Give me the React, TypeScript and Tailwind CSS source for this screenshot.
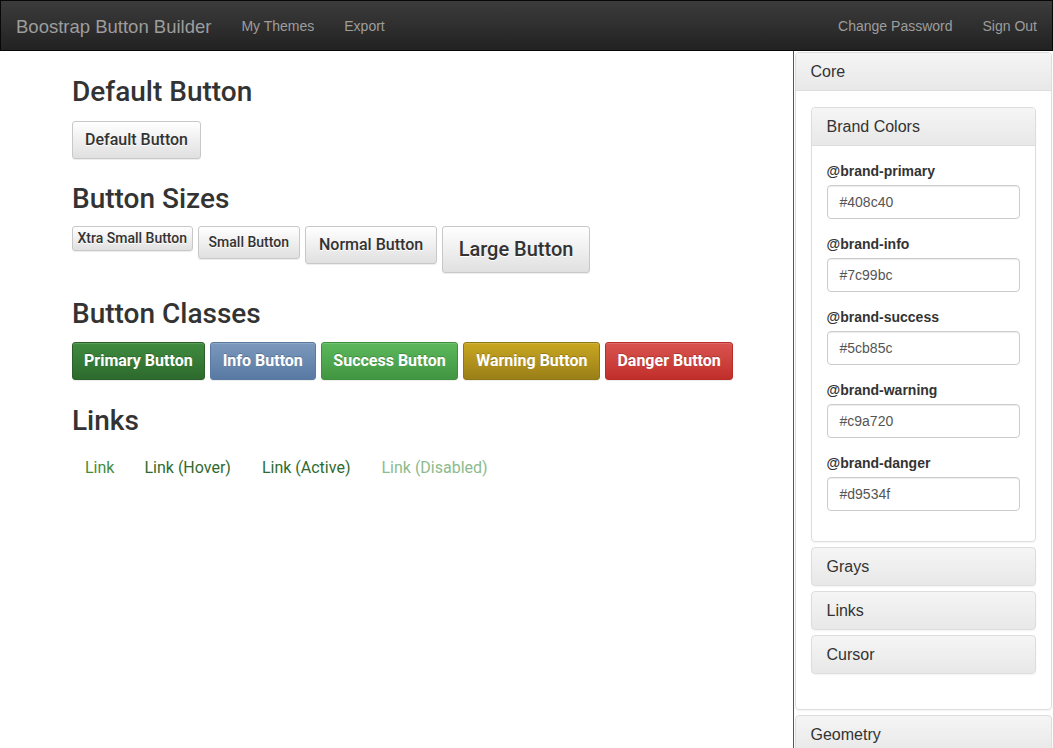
import React from 'react';

const roboto = { fontFamily: 'Roboto, "Liberation Sans", sans-serif' };

interface ColorField {
  label: string;
  value: string;
}

const brandColors: ColorField[] = [
  { label: '@brand-primary', value: '#408c40' },
  { label: '@brand-info', value: '#7c99bc' },
  { label: '@brand-success', value: '#5cb85c' },
  { label: '@brand-warning', value: '#c9a720' },
  { label: '@brand-danger', value: '#d9534f' },
];

const defaultBtn =
  'rounded-[3px] border border-[#c8c8c8] bg-gradient-to-b from-white to-[#e0e0e0] text-[#333] font-medium [text-shadow:0_1px_0_#fff] shadow-[inset_0_1px_0_rgba(255,255,255,0.15),0_1px_1px_rgba(0,0,0,0.075)]';

const colorBtn =
  'h-[38px] rounded-[3px] border text-[16px] leading-[24px] font-bold text-white [text-shadow:0_-1px_0_rgba(0,0,0,0.2)] shadow-[inset_0_1px_0_rgba(255,255,255,0.15),0_1px_1px_rgba(0,0,0,0.075)]';

function Heading({ children, className }: { children: React.ReactNode; className?: string }) {
  return (
    <h2 className={`text-[28px] leading-[31px] font-medium text-[#333] ${className ?? ''}`}>{children}</h2>
  );
}

const panelHead = 'h-[38px] px-[15px] flex items-center text-[16px] text-[#333]';

function CollapsedPanel({ title, className }: { title: string; className?: string }) {
  return (
    <div
      className={`rounded-[4px] border border-[#ddd] bg-gradient-to-b from-[#f5f5f5] to-[#e8e8e8] shadow-[0_1px_2px_rgba(0,0,0,0.05)] ${className ?? ''}`}
    >
      <div className="h-[37px] px-[15px] flex items-center text-[16px] text-[#333]">{title}</div>
    </div>
  );
}

export default function App() {
  return (
    <div
      className="h-[748px] overflow-hidden flex flex-col bg-white"
      style={{ fontFamily: '"Liberation Sans", Arial, sans-serif' }}
    >
      {/* Navbar */}
      <nav className="h-[51px] shrink-0 pt-[2px] flex items-center justify-between border border-[#080808] bg-gradient-to-b from-[#3c3c3c] to-[#222] text-[#9d9d9d]">
        <div className="flex items-center">
          <span className="px-[15px] text-[18.5px]">Boostrap Button Builder</span>
          <span className="px-[15px] text-[14px]">My Themes</span>
          <span className="px-[15px] text-[14px]">Export</span>
        </div>
        <div className="flex items-center">
          <span className="px-[15px] text-[14px]">Change Password</span>
          <span className="px-[15px] text-[14px]">Sign Out</span>
        </div>
      </nav>

      <div className="flex flex-1 min-h-0">
        {/* Preview */}
        <main className="flex-1 pl-[72px] pt-[25px]" style={roboto}>
          <Heading>Default Button</Heading>
          <div className="mt-[14px] flex">
            <button className={`h-[38px] px-[12px] text-[16px] leading-[24px] ${defaultBtn}`}>Default Button</button>
          </div>

          <Heading className="mt-[24px]">Button Sizes</Heading>
          <div className="mt-[12px] flex items-start gap-[5px]">
            <button className={`h-[25px] px-[4.5px] text-[14px] leading-[21px] ${defaultBtn}`}>Xtra Small Button</button>
            <button className={`h-[33px] px-[10px] text-[14px] leading-[21px] ${defaultBtn}`}>Small Button</button>
            <button className={`h-[38px] px-[13px] text-[16px] leading-[24px] ${defaultBtn}`}>Normal Button</button>
            <button className={`h-[47px] px-[15.5px] text-[20px] leading-[25px] ${defaultBtn}`}>Large Button</button>
          </div>

          <Heading className="mt-[25px]">Button Classes</Heading>
          <div className="mt-[13px] flex items-start gap-[5px]">
            <button className={`${colorBtn} px-[11px] border-[#2b602b] bg-gradient-to-b from-[#408c40] to-[#2d6a2d]`}>Primary Button</button>
            <button className={`${colorBtn} px-[12px] border-[#5a7aa2] bg-gradient-to-b from-[#7c99bc] to-[#5879a3]`}>Info Button</button>
            <button className={`${colorBtn} px-[11.5px] border-[#3e8f3e] bg-gradient-to-b from-[#5cb85c] to-[#419641]`}>Success Button</button>
            <button className={`${colorBtn} px-[12px] border-[#8f7617] bg-gradient-to-b from-[#c9a720] to-[#9a7f18]`}>Warning Button</button>
            <button className={`${colorBtn} px-[11px] border-[#b92c28] bg-gradient-to-b from-[#d9534f] to-[#c12e2a]`}>Danger Button</button>
          </div>

          <Heading className="mt-[25px]">Links</Heading>
          <div className="mt-[20px] flex items-start gap-[5px] text-[16px] leading-[24px]">
            <span className="px-[13px] text-[#408c40]">Link</span>
            <span className="px-[13px] -ml-[1px] text-[#2f6b2f]">Link (Hover)</span>
            <span className="px-[13px] text-[#2f6b2f]">Link (Active)</span>
            <span className="px-[13px] text-[#8cba8c]">Link (Disabled)</span>
          </div>
        </main>

        {/* Variables sidebar */}
        <aside className="w-[260px] shrink-0 border-l border-[#555] pt-[1px] pl-[0.5px] pr-[1px]">
          <div className="rounded-[4px] border border-[#ddd] shadow-[0_1px_2px_rgba(0,0,0,0.05)]">
            <div className={`${panelHead} border-b border-[#ddd] bg-gradient-to-b from-[#f5f5f5] to-[#e8e8e8] rounded-t-[3px]`}>
              Core
            </div>
            <div className="px-[15px] pt-[16px] pb-[15px]">
              <div className="rounded-[4px] border border-[#ddd] shadow-[0_1px_2px_rgba(0,0,0,0.05)]">
                <div className={`${panelHead} border-b border-[#ddd] bg-gradient-to-b from-[#f5f5f5] to-[#e8e8e8] rounded-t-[3px]`}>
                  Brand Colors
                </div>
                <div className="p-[15px]">
                  {brandColors.map((f) => (
                    <div key={f.label} className="mb-[15px]">
                      <label className="block text-[14px] leading-[20px] font-bold text-[#333] mb-[4px]">{f.label}</label>
                      <div className="h-[34px] px-[12px] flex items-center rounded-[4px] border border-[#ccc] text-[14px] text-[#555] shadow-[inset_0_1px_1px_rgba(0,0,0,0.075)]">
                        {f.value}
                      </div>
                    </div>
                  ))}
                </div>
              </div>
              <CollapsedPanel title="Grays" className="mt-[5px]" />
              <CollapsedPanel title="Links" className="mt-[5px]" />
              <CollapsedPanel title="Cursor" className="mt-[5px]" />
              <div className="h-[20px]" />
            </div>
          </div>
          <CollapsedPanel title="Geometry" className="mt-[5px]" />
        </aside>
      </div>
    </div>
  );
}
